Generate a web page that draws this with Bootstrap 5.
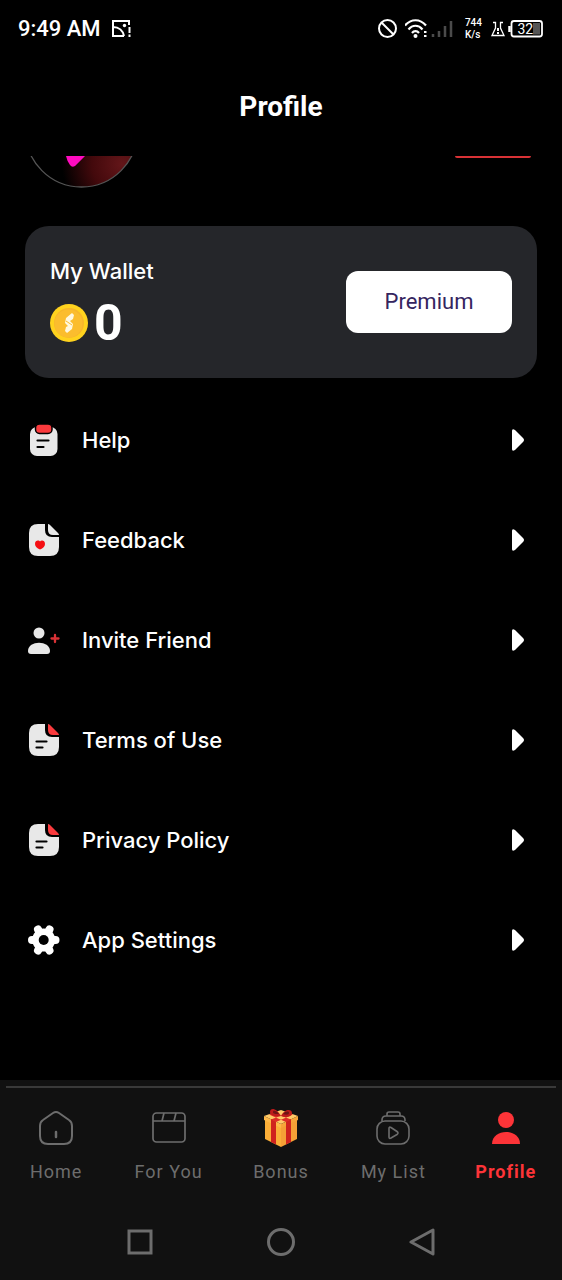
<!DOCTYPE html>
<html lang="en">
<head>
<meta charset="utf-8">
<meta name="viewport" content="width=device-width, initial-scale=1">
<title>Profile</title>
<link href="https://cdn.jsdelivr.net/npm/bootstrap@5.3.0/dist/css/bootstrap.min.css" rel="stylesheet">
<style>
  body { background: #000; color: #fff; font-family: Roboto, "Liberation Sans", sans-serif; }
  svg { display: block; flex: none; }
  .status-bar { height: 58px; padding: 0 18px; }
  .clock { font-size: 22px; line-height: 28px; font-weight: 500; }
  .net-speed { font-size: 10px; line-height: 12px; font-weight: 500; }
  .page-title { height: 98px; }
  .page-title h1 { font-size: 28px; line-height: 32px; font-weight: 700; }
  .profile-strip { height: 34px; padding: 0 31px 0 30px; overflow: hidden; }
  .edit-edge { width: 76px; height: 2px; background: #d93236; border-radius: 0 0 2px 2px; }
  .wallet { background: #25262a; border-radius: 24px; margin: 36px 25px 12px; padding: 25px; min-height: 152px; }
  .wallet-label { font-family: Inter, sans-serif; font-size: 22px; line-height: 32px; font-weight: 500; }
  .wallet-row { gap: 6px; margin-top: 6px; }
  .wallet-sum { font-size: 50px; line-height: 60px; font-weight: 700; }
  .btn-premium, .btn-premium:hover { background: #fff; color: #35255f; border: 0; border-radius: 12px; width: 166px; height: 62px; font-size: 22px; line-height: 28px; font-weight: 400; }
  .menu-row { height: 100px; padding: 0 37px 0 28px; gap: 22px; color: #fff; text-decoration: none; font-family: Inter, sans-serif; font-size: 22px; line-height: 32px; font-weight: 500; }
  .bottom { background: #111; padding-top: 6px; }
  .divider { margin: 0 6px 22px; height: 2px; background: #393939; }
  .tabs { padding-bottom: 20px; }
  .tab-item { color: #6d6d6d; text-decoration: none; font-size: 18px; line-height: 24px; letter-spacing: 1px; gap: 14px; }
  .tab-item.active { color: #fd3438; font-weight: 700; }
  .sys-keys { height: 76px; padding: 0 70px; }
  .sys-keys button { background: none; border: 0; padding: 0; flex: 1; display: flex; justify-content: center; }
</style>
</head>
<body class="d-flex flex-column min-vh-100">

<div class="status-bar d-flex align-items-center justify-content-between">
  <div class="d-flex align-items-center gap-2">
    <span class="clock">9:49 AM</span>
    <svg width="24" height="20" viewBox="0 0 24 20" fill="none" stroke="#fff" stroke-width="2"><path d="M20 6V2H4v15h11M4 8c6 0 10 4 11 9"/><path d="M20.500 8v6M20.500 15.500v2.500"/><circle cx="15.500" cy="6.500" r="1.700" fill="#fff" stroke="none"/></svg>
  </div>
  <div class="d-flex align-items-center">
    <svg width="20" height="20" viewBox="0 0 20 20" fill="none" stroke="#fff" stroke-width="2"><circle cx="10.500" cy="9.500" r="8.500"/><path d="M4.500 3.500l12 12"/></svg>
    <svg class="ms-2" width="52" height="20" viewBox="1 0 52 20" fill="none" stroke="#fff" stroke-width="2.200"><path d="M1 6.500C7-.5 16-.5 22 6.500M4.500 10.500c4-5 10-5 14 0M8 14c2-2.500 5-2.500 7 0"/><circle cx="11.500" cy="17" r="2" fill="#fff" stroke="none"/><path d="M20 13h2.500M20 17h2.500" stroke-width="2"/><g stroke="#4b4b4b" stroke-width="2.500"><path d="M29 15v3M35 12v6M41 7v11M47 2v16"/></g></svg>
    <div class="net-speed ms-2">744<br>K/s</div>
    <svg class="ms-2" width="54" height="20" viewBox="0 0 54 20" fill="none" stroke="#fff" stroke-width="1.300"><path d="M3 3.500h2.500V9L2 16.500h12L10.500 9V3.500H13"/><path d="M8 9v3M8 13v2" stroke-width="2"/><path d="M19.500 7v6" stroke-width="2.500"/><rect x="21.500" y="2" width="30.500" height="15.500" rx="2.500" stroke-width="1.800"/><rect x="43" y="4" width="7" height="11.500" fill="#555" stroke="none"/><text x="27.500" y="14.500" fill="#fff" stroke="none" font-size="14">32</text></svg>
  </div>
</div>

<header class="page-title d-flex align-items-center justify-content-center"><h1 class="m-0">Profile</h1></header>

<div class="profile-strip d-flex justify-content-between align-items-start">
  <svg width="104" height="34" viewBox="0 0 104 34">
    <defs><radialGradient id="glow" gradientUnits="userSpaceOnUse" cx="92" cy="8" r="60"><stop offset="0" stop-color="#631619"/><stop offset=".5" stop-color="#43090c"/><stop offset="1" stop-color="#000"/></radialGradient></defs>
    <circle cx="51.500" cy="-25" r="56" fill="url(#glow)" stroke="#555" stroke-width="1.300"/>
    <path d="M36 0h19L45 10q-3 2-5-1-3-4-4-9" fill="#ff0bc0"/>
  </svg>
  <div class="edit-edge"></div>
</div>

<main class="flex-grow-1">
  <section class="wallet d-flex align-items-center justify-content-between">
    <div class="pt-1">
      <div class="wallet-label">My Wallet</div>
      <div class="wallet-row d-flex align-items-center">
        <svg width="38" height="38" viewBox="0 0 38 38"><circle cx="19" cy="19" r="19" fill="#ffd21e"/><circle cx="19" cy="19" r="15" fill="#f7b52c"/><circle cx="18.500" cy="19.500" r="14" fill="#fbbd2e"/><path d="M22 9l2 2-1 4-3 2 3 3-1 5-5 4-2-2 1-4 2-1-3-3 1-5z" fill="#fff8df"/><path d="M16 17l6 4" stroke="#fbbd2e" stroke-width="1"/></svg>
        <span class="wallet-sum">0</span>
      </div>
    </div>
    <button type="button" class="btn btn-premium">Premium</button>
  </section>

  <nav aria-label="Profile menu">
    <a href="#" class="menu-row d-flex align-items-center">
      <svg width="32" height="34" viewBox="0 0 32 34"><rect x="2" y="4" width="27.500" height="29" rx="7" fill="#e8e8e8"/><rect x="7.500" y="1" width="16.500" height="9.500" rx="4" fill="#fa3a3d" stroke="#000" stroke-width="1.500"/><path d="M9.500 17.500h11M9.500 24h6" stroke="#000" stroke-width="2.200" stroke-linecap="round"/></svg>
      <span class="flex-grow-1">Help</span>
      <svg width="14" height="24" viewBox="0 0 14 24"><path d="M1 3q0-3 3-1l8 8q2 2 0 4l-8 8q-3 2-3-1z" fill="#fff"/></svg>
    </a>
    <a href="#" class="menu-row d-flex align-items-center">
      <svg width="32" height="34" viewBox="0 0 32 34"><path d="M10 1h7v6q0 7 7 7h7v10q0 9-9 9H10q-9 0-9-9V10q0-9 9-9z" fill="#e8e8e8"/><path d="M20 1q1 0 2 1l8 8q1 1 1 2h-6q-5 0-5-5z" fill="#e8e8e8"/><path d="M12 26.500c-3-1-5-3-5-5.500 0-4 4-4 5-2.500 1-1.500 5-1.500 5 2.500 0 2.500-2 4.500-5 5.500z" fill="#f50e12"/></svg>
      <span class="flex-grow-1">Feedback</span>
      <svg width="14" height="24" viewBox="0 0 14 24"><path d="M1 3q0-3 3-1l8 8q2 2 0 4l-8 8q-3 2-3-1z" fill="#fff"/></svg>
    </a>
    <a href="#" class="menu-row d-flex align-items-center">
      <svg width="32" height="34" viewBox="0 0 32 34"><g fill="#e8e8e8"><circle cx="11" cy="10" r="5.500"/><path d="M0 28c0-11 22-11 22 0q0 3-3 3H3q-3 0-3-3z"/></g><path d="M27 12v7M23.500 15.500h7" stroke="#d93236" stroke-width="2.300" stroke-linecap="round"/></svg>
      <span class="flex-grow-1">Invite Friend</span>
      <svg width="14" height="24" viewBox="0 0 14 24"><path d="M1 3q0-3 3-1l8 8q2 2 0 4l-8 8q-3 2-3-1z" fill="#fff"/></svg>
    </a>
    <a href="#" class="menu-row d-flex align-items-center">
      <svg width="32" height="34" viewBox="0 0 32 34"><path d="M10 1h7v6q0 7 7 7h7v10q0 9-9 9H10q-9 0-9-9V10q0-9 9-9z" fill="#e8e8e8"/><path d="M20 1q1 0 2 1l8 8q1 1 1 2h-6q-5 0-5-5z" fill="#fa3a3d"/><path d="M8.500 18.500h10M8.500 24.500h6" stroke="#000" stroke-width="2.200" stroke-linecap="round"/></svg>
      <span class="flex-grow-1">Terms of Use</span>
      <svg width="14" height="24" viewBox="0 0 14 24"><path d="M1 3q0-3 3-1l8 8q2 2 0 4l-8 8q-3 2-3-1z" fill="#fff"/></svg>
    </a>
    <a href="#" class="menu-row d-flex align-items-center">
      <svg width="32" height="34" viewBox="0 0 32 34"><path d="M10 1h7v6q0 7 7 7h7v10q0 9-9 9H10q-9 0-9-9V10q0-9 9-9z" fill="#e8e8e8"/><path d="M20 1q1 0 2 1l8 8q1 1 1 2h-6q-5 0-5-5z" fill="#fa3a3d"/><path d="M8.500 18.500h10M8.500 24.500h6" stroke="#000" stroke-width="2.200" stroke-linecap="round"/></svg>
      <span class="flex-grow-1">Privacy Policy</span>
      <svg width="14" height="24" viewBox="0 0 14 24"><path d="M1 3q0-3 3-1l8 8q2 2 0 4l-8 8q-3 2-3-1z" fill="#fff"/></svg>
    </a>
    <a href="#" class="menu-row d-flex align-items-center">
      <svg width="32" height="34" viewBox="0 0 32 34"><g stroke="#fff" stroke-width="8" stroke-linecap="round"><path d="M4 17h23.500M10 6.500l11.500 21M21.500 6.500l-11.500 21"/></g><circle cx="15.700" cy="17" r="11.500" fill="#fff"/><circle cx="15.700" cy="17" r="5" fill="#000"/></svg>
      <span class="flex-grow-1">App Settings</span>
      <svg width="14" height="24" viewBox="0 0 14 24"><path d="M1 3q0-3 3-1l8 8q2 2 0 4l-8 8q-3 2-3-1z" fill="#fff"/></svg>
    </a>
  </nav>
</main>

<footer class="bottom">
  <div class="divider"></div>
  <nav class="tabs" aria-label="Main">
    <div class="row g-0 row-cols-5">
      <a href="#" class="col tab-item d-flex flex-column align-items-center">
        <svg width="36" height="36" viewBox="0 0 36 36" fill="none" stroke="#6d6d6d" stroke-width="2" stroke-linecap="round"><path d="M15 3q3-2 6 0l10 7q3 2 3 6v10q0 8-8 8H10q-8 0-8-8V16q0-4 3-6z"/><path d="M18 22v5" stroke-width="2.500"/></svg>
        <span>Home</span>
      </a>
      <a href="#" class="col tab-item d-flex flex-column align-items-center">
        <svg width="36" height="36" viewBox="0 0 36 36" fill="none" stroke="#6d6d6d" stroke-width="1.700"><rect x="2" y="3" width="32" height="29" rx="3.500"/><path d="M2 11h32M13 3l-2 8M25 3l-2 8"/></svg>
        <span>For You</span>
      </a>
      <a href="#" class="col tab-item d-flex flex-column align-items-center">
        <svg class="overflow-visible" width="36" height="36" viewBox="0 0 36 36"><path d="M2 8l16 7v22L2 29z" fill="#fbae38"/><path d="M18 15l16-7v21l-16 8z" fill="#f5a036"/><path d="M1 6L18 0l17 6-17 8z" fill="#ffca68"/><path d="M1 6l17 8v4L1 10z" fill="#ffb848"/><path d="M35 6l-17 8v4l17-8z" fill="#f7a63a"/><path d="M8 9l5 2.500v23L8 32zM23 11.500L28 9v23l-5 2.500z" fill="#cf231e"/><path d="M8 9.500L25 3l5 1.500L13 12zM28 9.500L11 3 6 4.500 23 12z" fill="#de2d26"/><path d="M18 6C14-2 7-3 7 2c0 4 7 5 11 4zM18 6c4-8 11-7 11-3 0 4-7 5-11 3z" fill="#bd1b1b"/><path d="M16 4c-3-4-6-4-6-2s3 2 6 2zM20 4c3-3 6-3 6-1s-3 2-6 1z" fill="#701414"/></svg>
        <span>Bonus</span>
      </a>
      <a href="#" class="col tab-item d-flex flex-column align-items-center">
        <svg width="36" height="36" viewBox="0 0 36 36" fill="none" stroke="#6d6d6d" stroke-width="1.600" stroke-linejoin="round"><path d="M12 6V4q0-2 2-2h9q2 0 2 2v2M7 11v-1q0-4 4-4h15q4 0 4 4v1"/><rect x="2" y="11" width="32" height="23" rx="8"/><path d="M14 18.500q0-2 2-1l6 4q2 1.500 0 3l-6 3.500q-2 1-2-1z"/></svg>
        <span>My List</span>
      </a>
      <a href="#" class="col tab-item active d-flex flex-column align-items-center" aria-current="page">
        <svg width="36" height="36" viewBox="0 0 36 36" fill="#fd3438"><circle cx="18" cy="10" r="8"/><path d="M4 34c0-16 28-16 28 0z"/></svg>
        <span>Profile</span>
      </a>
    </div>
  </nav>
  <div class="sys-keys d-flex align-items-center">
    <button type="button" aria-label="Recent apps"><svg width="28" height="28" viewBox="0 0 28 28" fill="none" stroke="#6d6d6d" stroke-width="3"><rect x="3" y="3" width="22" height="22"/></svg></button>
    <button type="button" aria-label="Home screen"><svg width="28" height="28" viewBox="0 0 28 28" fill="none" stroke="#6d6d6d" stroke-width="3"><circle cx="14" cy="14" r="12.500"/></svg></button>
    <button type="button" aria-label="Back"><svg width="28" height="28" viewBox="0 0 28 28" fill="none" stroke="#6d6d6d" stroke-width="3" stroke-linejoin="round"><path d="M25 2v24L3 14z"/></svg></button>
  </div>
</footer>

<script src="https://cdn.jsdelivr.net/npm/bootstrap@5.3.0/dist/js/bootstrap.bundle.min.js"></script>
</body>
</html>
